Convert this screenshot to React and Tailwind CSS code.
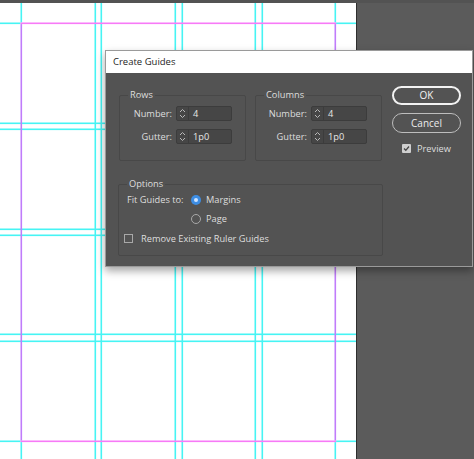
import React from "react";

const CYAN = "#46f4f4";
const innerX = [95, 101, 175, 182, 255, 262];
const innerY = [123, 129, 229, 235, 334, 341];

function Guides() {
  // page coords are offset by 3px (top bar)
  const y = (v) => v - 3 - 0.5;
  return (
    <svg width="356" height="456" className="block">
      {innerX.map((x) => (
        <rect key={"v" + x} x={x - 0.5} y={0} width="1.6" height="456" fill={CYAN} />
      ))}
      {innerY.map((v) => (
        <rect key={"h" + v} x={0} y={y(v)} width="356" height="1.6" fill={CYAN} />
      ))}
      {/* guides on margin positions: only outside the margin box */}
      <rect x={20.5} y={0} width="1.6" height={y(23)} fill={CYAN} />
      <rect x={20.5} y={y(441) + 1.6} width="1.6" height={20} fill={CYAN} />
      <rect x={334.5} y={0} width="1.6" height={y(23)} fill={CYAN} />
      <rect x={334.5} y={y(441) + 1.6} width="1.6" height={20} fill={CYAN} />
      <rect x={0} y={y(23)} width={20.5} height="1.6" fill={CYAN} />
      <rect x={336.1} y={y(23)} width={20} height="1.6" fill={CYAN} />
      <rect x={0} y={y(441)} width={20.5} height="1.6" fill={CYAN} />
      <rect x={336.1} y={y(441)} width={20} height="1.6" fill={CYAN} />
      {/* margins */}
      <rect x={20.5} y={y(23)} width={315.6} height="1.6" fill="#f77af7" />
      <rect x={20.5} y={y(441)} width={315.6} height="1.6" fill="#f77af7" />
      <rect x={20.5} y={y(23) + 1.6} width="1.6" height={y(441) - y(23) - 1.6} fill="#c07cfb" />
      <rect x={334.5} y={y(23) + 1.6} width="1.6" height={y(441) - y(23) - 1.6} fill="#c07cfb" />
    </svg>
  );
}

function Spinner({ value }) {
  return (
    <div className="flex h-[15px] w-[56px] rounded-[2px] border border-[#3c3c3c] bg-[#464646]">
      <div className="flex w-[12px] flex-col items-center justify-center border-r border-[#3c3c3c]">
        <svg width="7" height="11" viewBox="0 0 7 11" fill="none" stroke="#b8b8b8" strokeWidth="1">
          <path d="M1 4 L3.5 1.5 L6 4" />
          <path d="M1 7 L3.5 9.5 L6 7" />
        </svg>
      </div>
      <div className="flex items-center pl-[4px] text-[9.25px] leading-none text-[#e6e6e6]">{value}</div>
    </div>
  );
}

function Group({ label, className, children }) {
  return (
    <div className={"relative rounded-[2px] border border-[#484848] " + className}>
      <span className="absolute -top-[7px] left-[8px] bg-[#535353] px-[2px] text-[9.25px] leading-[12px] text-[#dedede]">
        {label}
      </span>
      {children}
    </div>
  );
}

function GridGroup({ label, labelW }) {
  return (
    <Group label={label} className="h-[66px] w-[127px]">
      <div className="flex flex-col gap-[8px] pt-[10px]">
        <div className="flex items-center">
          <span className="text-right text-[9.25px] text-[#dedede]" style={{ width: labelW }}>
            Number:
          </span>
          <div className="ml-[4px]">
            <Spinner value="4" />
          </div>
        </div>
        <div className="flex items-center">
          <span className="text-right text-[9.25px] text-[#dedede]" style={{ width: labelW }}>
            Gutter:
          </span>
          <div className="ml-[4px]">
            <Spinner value="1p0" />
          </div>
        </div>
      </div>
    </Group>
  );
}

export default function App() {
  return (
    <div
      className="relative h-[459px] w-[474px] overflow-hidden bg-[#5b5b5b]"
      style={{ fontFamily: '"Open Sans", "Noto Sans", sans-serif' }}
    >
      <div className="h-[3px] w-full bg-[#535353]" />
      <div className="flex">
        <div className="h-[456px] w-[356px] bg-white">
          <Guides />
        </div>
        <div className="h-[456px] w-[1px] bg-[#2e2e2e]" />
      </div>

      {/* Dialog */}
      <div className="absolute left-[105px] top-[50px] w-[368px] border border-[#9a9a9a] shadow-[0_4px_8px_rgba(0,0,0,0.35)]">
        <div className="flex h-[22px] items-center bg-white pl-[7px] text-[9.5px] text-[#1e1e1e]">Create Guides</div>
        <div className="flex h-[193px] bg-[#535353] pl-[13px] pt-[22px]">
          <div className="flex flex-col">
            <div className="flex gap-[9px]">
              <GridGroup label="Rows" labelW={52} />
              <GridGroup label="Columns" labelW={51} />
            </div>
            <Group label="Options" className="-ml-[1px] mt-[23px] h-[72px] w-[265px]">
              <div className="flex items-center pl-[8px] pt-[8px]">
                <span className="w-[64px] text-[9.25px] text-[#dedede]">Fit Guides to:</span>
                <span className="flex h-[10px] w-[10px] items-center justify-center rounded-full bg-[#3d8de3]">
                  <span className="h-[4px] w-[4px] rounded-full bg-[#cfe3ff]" />
                </span>
                <span className="ml-[5px] text-[9.25px] text-[#dedede]">Margins</span>
              </div>
              <div className="flex items-center pl-[72px] pt-[5px]">
                <span className="h-[10px] w-[10px] rounded-full border border-[#a8a8a8]" />
                <span className="ml-[5px] text-[9.25px] text-[#dedede]">Page</span>
              </div>
              <div className="flex items-center pl-[5px] pt-[6px]">
                <span className="h-[9px] w-[9px] border border-[#a8a8a8]" />
                <span className="ml-[8px] text-[9.25px] text-[#dedede]">Remove Existing Ruler Guides</span>
              </div>
            </Group>
          </div>
          <div className="ml-[9px] flex flex-col">
            <div className="-mt-[9px] flex h-[19px] w-[69px] items-center justify-center rounded-full border-2 border-[#f2f2f2] text-[10px] text-[#f2f2f2]">
              OK
            </div>
            <div className="mt-[8px] flex h-[20px] w-[69px] items-center justify-center rounded-full border border-[#bdbdbd] text-[10px] text-[#ececec]">
              Cancel
            </div>
            <div className="ml-[10px] mt-[9px] flex items-center">
              <span className="flex h-[9px] w-[9px] items-center justify-center rounded-[1px] bg-[#cfcfcf]">
                <svg width="7" height="7" viewBox="0 0 7 7" fill="none" stroke="#444" strokeWidth="1.3">
                  <path d="M1 3.5 L2.8 5.3 L6 1.5" />
                </svg>
              </span>
              <span className="ml-[6px] text-[9.25px] text-[#dedede]">Preview</span>
            </div>
          </div>
        </div>
      </div>
    </div>
  );
}
